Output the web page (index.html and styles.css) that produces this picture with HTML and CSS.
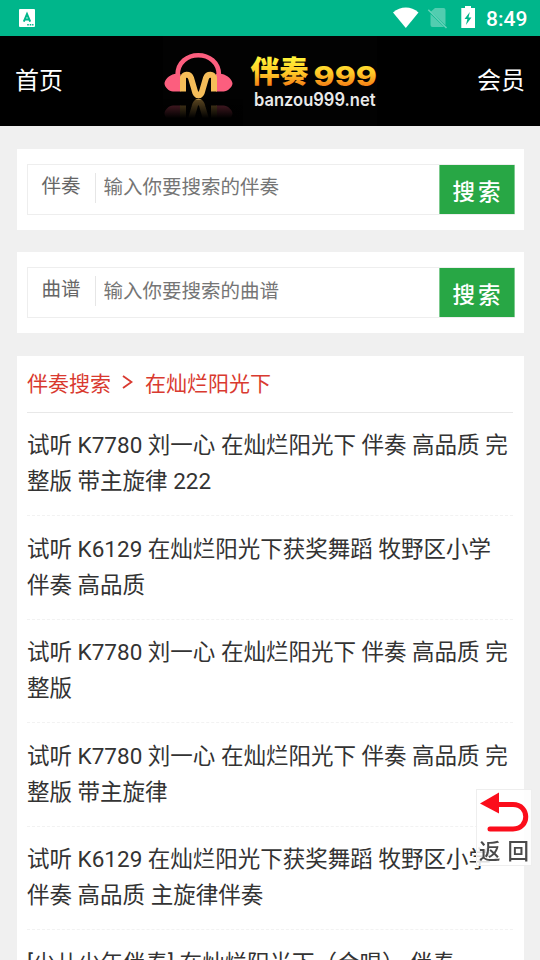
FILE: index.html
```html
<!DOCTYPE html>
<html lang="zh-CN">
<head>
<meta charset="utf-8">
<title>伴奏999</title>
<link rel="stylesheet" href="styles.css">
</head>
<body>
<div class="statusbar">
  <svg class="app-icon" viewBox="0 0 16 18"><rect width="16" height="18" rx="1" fill="#fff"/><path d="M4.800 12.600 8 5l3.200 7.600M5.800 10.400h4.400" fill="none" stroke="#00b68b" stroke-width="2"/><path d="M8.200 15.800h1.600m.9 0h1.600m.8 0h1.400" stroke="#00b68b" stroke-width="1.400"/></svg>
  <svg class="status-icons" viewBox="0 0 90 24">
    <path d="M0 6.500C7.500.1 18-.1 25.500 6.500L12.800 22z" fill="#fff"/>
    <path d="M42 2H50.500q2 0 2 2v15.200L38 5.500zM37.500 8 51 21H39.500q-2 0-2-2z" fill="#fff" opacity=".32"/>
    <path d="M35.300 3.700 53.500 22" stroke="#fff" stroke-width="1.500" opacity=".4"/>
    <path d="M68.300 2h3.700V0h6v2h4v20H68.300z" fill="#fff"/>
    <path d="M76.800 6 71.500 13h2.900l-1.500 6 5.600-7.600h-3z" fill="#00b68b"/>
  </svg>
  <span class="clock">8:49</span>
</div>
<header class="topbar">
  <a class="nav">首页</a>
  <svg class="logo" viewBox="0 0 214 90">
    <defs>
      <linearGradient id="gold" gradientUnits="userSpaceOnUse" x1="0" y1="20" x2="0" y2="51"><stop offset="0" stop-color="#fff83a"/><stop offset=".55" stop-color="#ffc928"/><stop offset="1" stop-color="#f47a14"/></linearGradient>
      <linearGradient id="fade" x1="0" y1="0" x2="0" y2="1"><stop offset="0" stop-color="#000" stop-opacity=".64"/><stop offset=".7" stop-color="#000"/></linearGradient>
      <g id="mark">
        <path d="M14.500 41V39.500C14.500 12.500 56 12.500 56 39.500V41" fill="none" stroke="#fc5e7e" stroke-width="4.700"/>
        <path d="M17.500 38V55.500H10C6 55.500 1.500 51 1.500 47.500S6 39 11.500 38zM53 38V55.500h7.500c4 0 9-4.500 9-8S64.500 39 59 38z" fill="#fc5e7e"/>
        <path d="M20 55.500V42C20 38 26.500 37.500 28 42L31.500 54C33 61 38 61 39.500 54L43 42C44.500 37.500 51 38 51 42V55.500" fill="none" stroke="#f5bd59" stroke-width="6"/>
      </g>
    </defs>
    <rect width="214" height="90" fill="#020202"/>
    <use href="#mark" transform="matrix(1 0 0 -1 0 125)"/>
    <rect y="63.500" width="80" height="26.500" fill="url(#fade)"/>
    <use href="#mark"/>
    <text class="logo-cn" x="87.500" y="45.500" textLength="58" lengthAdjust="spacingAndGlyphs">伴奏</text>
    <text class="logo-num" x="150.500" y="50" textLength="63.500" lengthAdjust="spacingAndGlyphs">999</text>
    <text class="logo-url" x="91" y="69.500" textLength="121.500" lengthAdjust="spacingAndGlyphs">banzou999.net</text>
  </svg>
  <a class="nav">会员</a>
</header>
<main>
  <form class="card search">
    <div class="field"><label>伴奏</label><input placeholder="输入你要搜索的伴奏"><button type="button">搜索</button></div>
  </form>
  <form class="card search">
    <div class="field"><label>曲谱</label><input placeholder="输入你要搜索的曲谱"><button type="button">搜索</button></div>
  </form>
  <section class="card results">
    <h1><span>伴奏搜索</span><svg class="chevron" viewBox="0 0 11 14"><path d="M1 1 9.500 7 1 13" fill="none" stroke="#d93a30" stroke-width="1.900"/></svg><span>在灿烂阳光下</span></h1>
    <ul>
      <li>试听 K7780 刘一心 在灿烂阳光下 伴奏 高品质 完整版 带主旋律 222</li>
      <li>试听 K6129 在灿烂阳光下获奖舞蹈 牧野区小学伴奏 高品质</li>
      <li>试听 K7780 刘一心 在灿烂阳光下 伴奏 高品质 完整版</li>
      <li>试听 K7780 刘一心 在灿烂阳光下 伴奏 高品质 完整版 带主旋律</li>
      <li>试听 K6129 在灿烂阳光下获奖舞蹈 牧野区小学伴奏 高品质 主旋律伴奏</li>
      <li>[少儿少年伴奏] 在灿烂阳光下（合唱） 伴奏</li>
    </ul>
  </section>
</main>
<a class="back">
  <svg viewBox="0 0 55 45"><path d="M15 15.500H37C54 15.500 54 40 37 40H14" fill="none" stroke="#fb0d1b" stroke-width="5" stroke-linecap="round"/><path d="M4 14.500 23 3.500v21z" fill="#fb0d1b"/></svg>
  <span>返回</span>
</a>
</body>
</html>
```
FILE: styles.css
```css
* { box-sizing: border-box; }
html, body { height: 960px; overflow: hidden; }
body {
  margin: 0;
  background: #f0f0f0;
  font-family: Roboto, "Noto Sans CJK SC", sans-serif;
  font-weight: 400;
  color: #333;
}
.statusbar {
  height: 36px;
  background: #00b68b;
  display: flex;
  align-items: flex-start;
  padding: 0 12px 0 19px;
}
.app-icon { width: 16px; height: 18px; margin-top: 9px; }
.status-icons { width: 90px; height: 24px; margin: 6px 0 0 auto; }
.clock {
  width: 42px;
  margin-left: 3px;
  color: #fff;
  font-size: 21px;
  font-weight: 500;
  line-height: 38px;
  white-space: nowrap;
}
.topbar {
  height: 90px;
  background: #000;
  display: flex;
  align-items: center;
  justify-content: space-between;
  padding: 0 15px;
}
.nav { color: #fff; font-size: 24px; line-height: 36px; }
.logo { width: 214px; height: 90px; }
.logo-cn { font: 900 30px "Noto Sans CJK SC", sans-serif; fill: url(#gold); }
.logo-num { font: 800 27px Inter, sans-serif; fill: url(#gold); }
.logo-url { font: 600 18px Inter, sans-serif; fill: #e9e9e9; }
main { padding: 22.5px 16.5px 0; }
.card { background: #fff; margin: 0 0 22.5px; }
.search { height: 81px; padding: 15px 8.5px 0 10.5px; }
.field {
  height: 51px;
  border: 1px solid #eee;
  display: flex;
  align-items: flex-start;
}
.field label {
  width: 68px;
  height: 30px;
  margin-top: 8px;
  padding-left: 13.5px;
  border-right: 1px solid #e6e6e6;
  font-size: 19.5px;
  line-height: 27.5px;
  color: #666;
}
.field input {
  flex: 1;
  min-width: 0;
  height: 30px;
  margin-top: 8.5px;
  padding: 0 0 0 7.5px;
  border: 0;
  background: none;
  font: 400 19.5px/30px Roboto, "Noto Sans CJK SC", sans-serif;
}
.field input::placeholder { color: #757575; }
.field button {
  width: 76px;
  height: 49px;
  margin-right: -1px;
  padding: 2px 0 0 2px;
  border: 1px solid #7dca8f;
  border-width: 0 1px;
  background: #28a745;
  color: #fff;
  font: 500 22.5px/39px "Noto Sans CJK SC", sans-serif;
  letter-spacing: 3px;
}
.results { padding: 0 10.5px; }
h1 {
  display: flex;
  align-items: center;
  height: 57px;
  margin: 0;
  padding-bottom: 4px;
  border-bottom: 1.5px solid #e8e8e8;
  font-size: 21px;
  font-weight: 400;
  color: #d93a30;
}
.chevron { width: 11px; height: 14px; margin: 0 12px 0 11px; }
ul { margin: 0; padding: 0; list-style: none; }
li {
  height: 103.5px;
  padding: 14.7px 0;
  border-bottom: 1.5px dashed #f2f2f2;
  font-size: 22.5px;
  line-height: 36px;
  color: #333;
}
.back {
  position: fixed;
  left: 476px;
  top: 789px;
  width: 56px;
  height: 77px;
  background: rgba(255, 255, 255, .85);
  border: 1px solid #eee;
}
.back svg { display: block; width: 55px; height: 45px; margin: -1px; }
.back span {
  display: block;
  margin: 2px -6px 0 2px;
  font: 500 21.5px/30px "Noto Sans CJK SC", sans-serif;
  letter-spacing: 7px;
  color: #4a4a4a;
  white-space: nowrap;
}
```
